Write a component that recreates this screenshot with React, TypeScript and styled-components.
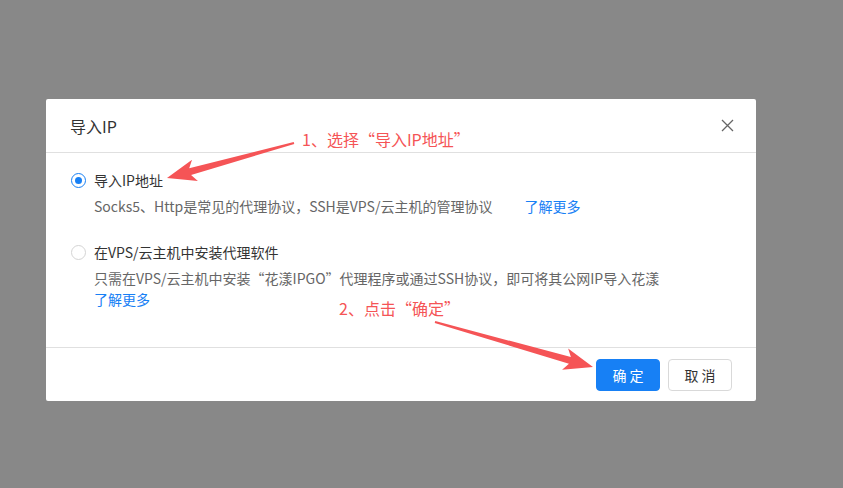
import React, { useState } from 'react';
import styled, { createGlobalStyle } from 'styled-components';

const GlobalStyle = createGlobalStyle`
  html, body {
    margin: 0;
    padding: 0;
    background: #888888;
    font-family: "Noto Sans CJK SC", "Noto Sans", sans-serif;
  }
`;

const PageStyled = styled.div`
  position: relative;
  width: 843px;
  height: 488px;
  box-sizing: border-box;
  padding: 99px 0 0 46px;
  overflow: hidden;
`;

const ModalStyled = styled.div`
  width: 710px;
  background: #ffffff;
  border-radius: 2px;
  color: #333333;
`;

const HeaderStyled = styled.div`
  display: flex;
  align-items: center;
  justify-content: space-between;
  height: 53px;
  padding: 0 22px 0 24px;
  border-bottom: 1px solid #e0e0e0;
`;

const TitleStyled = styled.span`
  font-size: 16px;
  color: #333333;
`;

const CloseButtonStyled = styled.button`
  display: flex;
  padding: 0;
  border: none;
  background: transparent;
  cursor: pointer;
`;

const BodyStyled = styled.div`
  display: flex;
  flex-direction: column;
  gap: 24px;
  padding: 16px 24px 37px 25px;
`;

const OptionStyled = styled.div`
  display: flex;
  flex-direction: column;
`;

const OptionLabelStyled = styled.label`
  display: flex;
  align-items: center;
  gap: 8px;
  height: 22px;
  font-size: 14px;
  color: #333333;
  cursor: pointer;
`;

const RadioStyled = styled.span<{ $checked: boolean }>`
  position: relative;
  box-sizing: border-box;
  width: 15px;
  height: 15px;
  border-radius: 50%;
  border: 1px solid ${({ $checked }) => ($checked ? '#1780f5' : '#d4d4d4')};
  background: #ffffff;

  &::after {
    content: '';
    position: absolute;
    inset: 3px;
    border-radius: 50%;
    background: #1780f5;
    display: ${({ $checked }) => ($checked ? 'block' : 'none')};
  }
`;

const DescStyled = styled.p`
  margin: 5px 0 0 23px;
  font-size: 14px;
  line-height: 21px;
  color: #666666;
`;

const LinkStyled = styled.a<{ $inline?: boolean }>`
  display: ${({ $inline }) => ($inline ? 'inline' : 'block')};
  margin-left: ${({ $inline }) => ($inline ? '32px' : '0')};
  color: #1780f5;
  text-decoration: none;
  cursor: pointer;
`;

const FooterStyled = styled.div`
  display: flex;
  justify-content: flex-end;
  gap: 8px;
  padding: 11px 24px 10px;
  border-top: 1px solid #e0e0e0;
`;

const ButtonStyled = styled.button<{ $primary?: boolean }>`
  width: 64px;
  height: 32px;
  border-radius: 4px;
  font-family: inherit;
  font-size: 14px;
  letter-spacing: 3px;
  text-indent: 3px;
  cursor: pointer;
  border: 1px solid ${({ $primary }) => ($primary ? '#1780f5' : '#d9d9d9')};
  background: ${({ $primary }) => ($primary ? '#1780f5' : '#ffffff')};
  color: ${({ $primary }) => ($primary ? '#ffffff' : '#333333')};
`;

const AnnotationLayerStyled = styled.svg`
  position: absolute;
  left: 0;
  top: 0;
  pointer-events: none;
`;

const NoteStyled = styled.span<{ $x: number; $y: number }>`
  position: absolute;
  left: ${({ $x }) => $x}px;
  top: ${({ $y }) => $y}px;
  font-size: 16px;
  line-height: 20px;
  color: #f55456;
  white-space: nowrap;
`;

type Pt = [number, number];

// tapered arrow polygon from tail to tip
const arrowPoints = (tail: Pt, tip: Pt) => {
  const dx = tip[0] - tail[0];
  const dy = tip[1] - tail[1];
  const len = Math.hypot(dx, dy);
  const u: Pt = [dx / len, dy / len];
  const n: Pt = [-u[1], u[0]];
  const base: Pt = [tip[0] - 29 * u[0], tip[1] - 29 * u[1]];
  const join: Pt = [base[0] + 5 * u[0], base[1] + 5 * u[1]];
  const at = (p: Pt, k: number): string => `${p[0] + k * n[0]},${p[1] + k * n[1]}`;
  return [at(tail, 1), at(join, 3.5), at(base, 11), `${tip[0]},${tip[1]}`, at(base, -11), at(join, -3.5), at(tail, -1)].join(' ');
};

const CloseIcon = () => (
  <svg width="13" height="13" viewBox="0 0 13 13">
    <path d="M1 1 L12 12 M12 1 L1 12" stroke="#666" strokeWidth="1.3" fill="none" />
  </svg>
);

const App = () => {
  const [mode, setMode] = useState<'ip' | 'vps'>('ip');

  return (
    <>
      <GlobalStyle />
      <PageStyled>
        <ModalStyled>
          <HeaderStyled>
            <TitleStyled>导入IP</TitleStyled>
            <CloseButtonStyled aria-label="close">
              <CloseIcon />
            </CloseButtonStyled>
          </HeaderStyled>
          <BodyStyled>
            <OptionStyled>
              <OptionLabelStyled onClick={() => setMode('ip')}>
                <RadioStyled $checked={mode === 'ip'} />
                导入IP地址
              </OptionLabelStyled>
              <DescStyled>
                Socks5、Http是常见的代理协议，SSH是VPS/云主机的管理协议
                <LinkStyled $inline>了解更多</LinkStyled>
              </DescStyled>
            </OptionStyled>
            <OptionStyled>
              <OptionLabelStyled onClick={() => setMode('vps')}>
                <RadioStyled $checked={mode === 'vps'} />
                在VPS/云主机中安装代理软件
              </OptionLabelStyled>
              <DescStyled>
                只需在VPS/云主机中安装“花漾IPGO”代理程序或通过SSH协议，即可将其公网IP导入花漾
                <LinkStyled>了解更多</LinkStyled>
              </DescStyled>
            </OptionStyled>
          </BodyStyled>
          <FooterStyled>
            <ButtonStyled $primary>确定</ButtonStyled>
            <ButtonStyled>取消</ButtonStyled>
          </FooterStyled>
        </ModalStyled>

        <AnnotationLayerStyled width="843" height="488">
          <polygon points={arrowPoints([294, 143], [167, 178])} fill="#f55456" />
          <polygon points={arrowPoints([435, 322], [593, 367])} fill="#f55456" />
        </AnnotationLayerStyled>
        <NoteStyled $x={302} $y={129}>1、选择“导入IP地址”</NoteStyled>
        <NoteStyled $x={339} $y={298}>2、点击“确定”</NoteStyled>
      </PageStyled>
    </>
  );
};

export default App;
